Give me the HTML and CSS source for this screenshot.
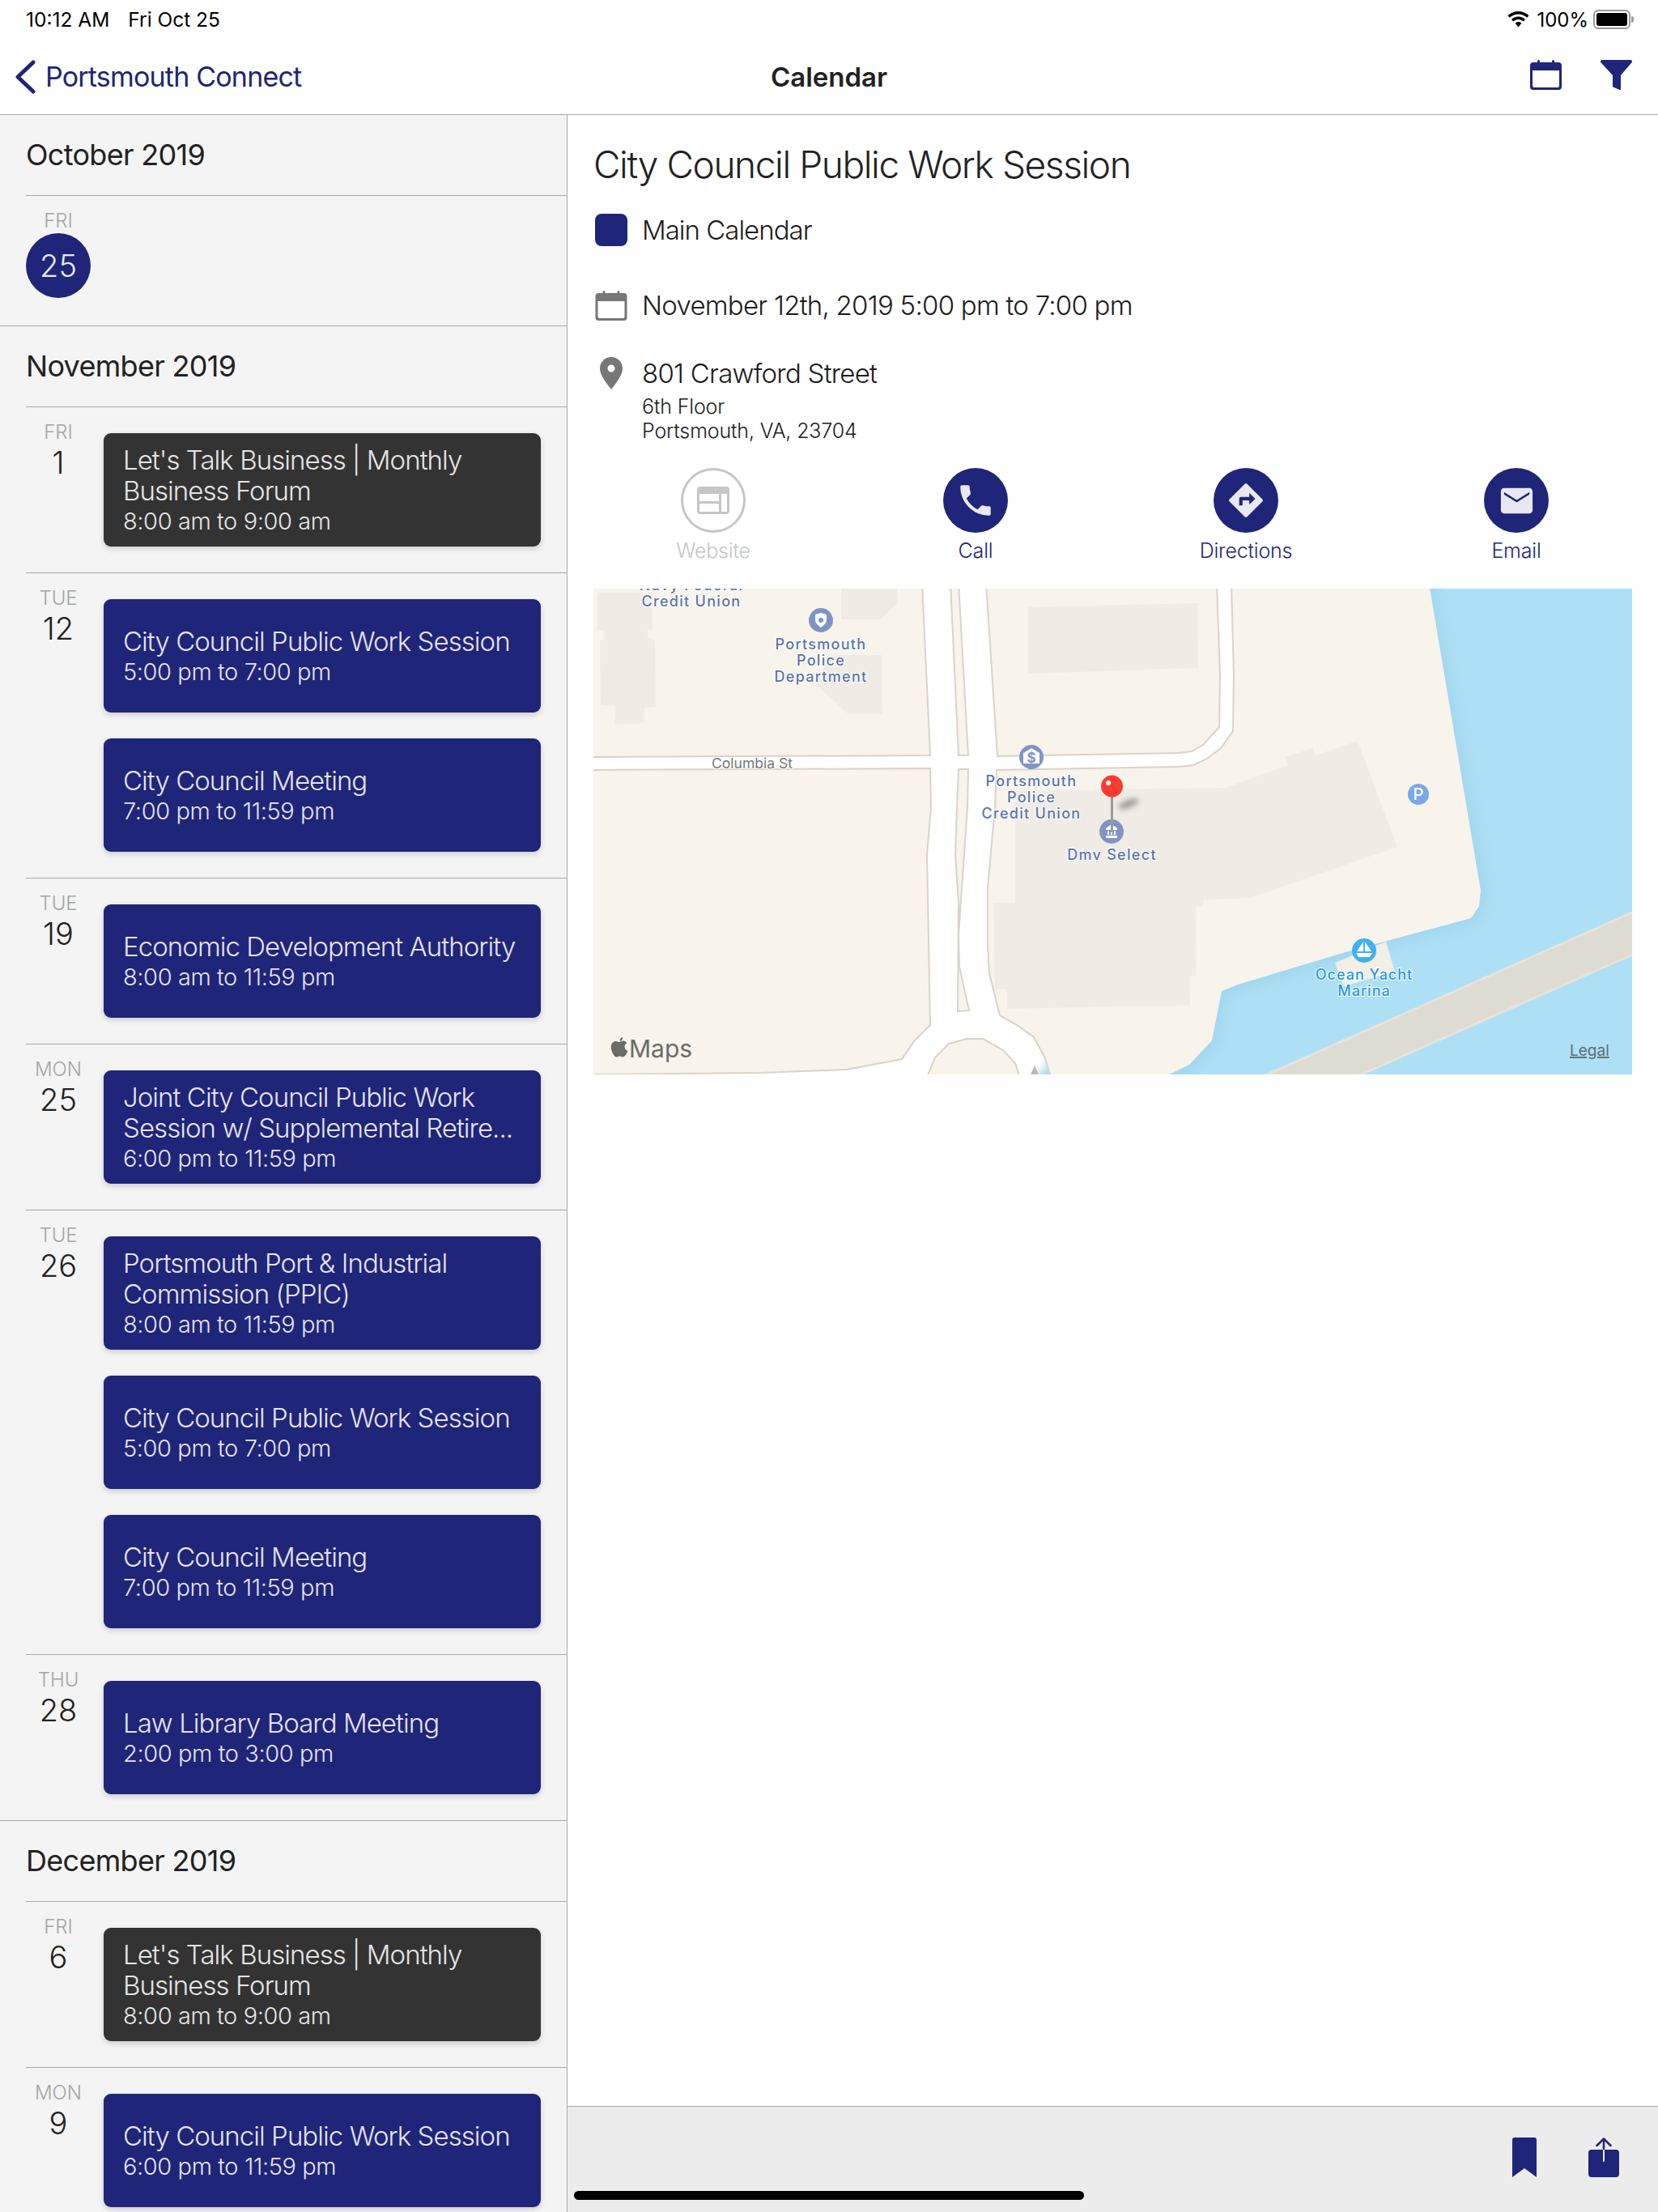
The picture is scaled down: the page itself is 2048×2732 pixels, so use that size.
FILE: index.html
```html
<!DOCTYPE html>
<html lang="en">
<head>
<meta charset="utf-8">
<title>Calendar</title>
<link rel="stylesheet" href="styles.css">
</head>
<body>
<div class="app">
  <header class="top">
    <div class="status">
      <div class="status-left"><span>10:12 AM</span><span>Fri Oct 25</span></div>
      <div class="status-right">
        <svg class="wifi" viewBox="0 0 27 20"><path d="M13.5 0C8.4 0 3.9 2 .5 5.2l2.3 2.5C5.600 5 9.300 3.400 13.500 3.400s7.900 1.600 10.700 4.300l2.300-2.500C23.100 2 18.600 0 13.500 0zM13.500 6.500c-3.300 0-6.300 1.300-8.500 3.400l2.300 2.500c1.600-1.500 3.800-2.500 6.200-2.500s4.600 1 6.200 2.500l2.300-2.500c-2.200-2.100-5.200-3.400-8.500-3.400zM13.500 13c-1.500 0-2.900.6-3.900 1.600l3.900 4.900 3.900-4.900c-1-1-2.400-1.600-3.900-1.600z"/></svg>
        <span class="pct">100%</span>
        <span class="battery"><span class="battery-fill"></span></span>
        <span class="battery-nub"></span>
      </div>
    </div>
    <nav class="nav">
      <div class="nav-back">
        <svg class="chevron" viewBox="0 0 26 42"><path d="M23 3 4 21l19 18" fill="none" stroke="currentColor" stroke-width="5" stroke-linecap="round" stroke-linejoin="round"/></svg>
        <span>Portsmouth Connect</span>
      </div>
      <div class="nav-title">Calendar</div>
      <div class="nav-icons">
        <svg class="nav-cal" viewBox="0 0 39 37"><path d="M4 3h5V1.500a1.500 1.500 0 0 1 3 0V3h15V1.500a1.500 1.500 0 0 1 3 0V3h5a4 4 0 0 1 4 4v26a4 4 0 0 1-4 4H4a4 4 0 0 1-4-4V7a4 4 0 0 1 4-4zM3 13v19a2 2 0 0 0 2 2h29a2 2 0 0 0 2-2V13z" fill="currentColor" fill-rule="evenodd"/></svg>
        <svg class="nav-filter" viewBox="0 0 39 37"><path d="M2 0h35a2 2 0 0 1 1.500 3.300L25 19v17a1 1 0 0 1-1.400.9l-8-3.400a1 1 0 0 1-.6-.9V19L.5 3.300A2 2 0 0 1 2 0z" fill="currentColor"/></svg>
      </div>
    </nav>
  </header>

  <div class="body">
    <aside class="side">
      <section class="month">
        <h2 class="month-title">October 2019</h2>
        <div class="row row-today">
          <div class="day"><div class="dow">FRI</div><div class="today">25</div></div>
        </div>
      </section>

      <section class="month">
        <h2 class="month-title">November 2019</h2>
        <div class="row">
          <div class="day"><div class="dow">FRI</div><div class="num">1</div></div>
          <div class="cards">
            <div class="card card-dark"><div class="card-title">Let's Talk Business | Monthly Business Forum</div><div class="card-time">8:00 am to 9:00 am</div></div>
          </div>
        </div>
        <div class="row">
          <div class="day"><div class="dow">TUE</div><div class="num">12</div></div>
          <div class="cards">
            <div class="card"><div class="card-title">City Council Public Work Session</div><div class="card-time">5:00 pm to 7:00 pm</div></div>
            <div class="card"><div class="card-title">City Council Meeting</div><div class="card-time">7:00 pm to 11:59 pm</div></div>
          </div>
        </div>
        <div class="row">
          <div class="day"><div class="dow">TUE</div><div class="num">19</div></div>
          <div class="cards">
            <div class="card"><div class="card-title">Economic Development Authority</div><div class="card-time">8:00 am to 11:59 pm</div></div>
          </div>
        </div>
        <div class="row">
          <div class="day"><div class="dow">MON</div><div class="num">25</div></div>
          <div class="cards">
            <div class="card"><div class="card-title">Joint City Council Public Work Session w/ Supplemental Retire...</div><div class="card-time">6:00 pm to 11:59 pm</div></div>
          </div>
        </div>
        <div class="row">
          <div class="day"><div class="dow">TUE</div><div class="num">26</div></div>
          <div class="cards">
            <div class="card"><div class="card-title">Portsmouth Port &amp; Industrial Commission (PPIC)</div><div class="card-time">8:00 am to 11:59 pm</div></div>
            <div class="card"><div class="card-title">City Council Public Work Session</div><div class="card-time">5:00 pm to 7:00 pm</div></div>
            <div class="card"><div class="card-title">City Council Meeting</div><div class="card-time">7:00 pm to 11:59 pm</div></div>
          </div>
        </div>
        <div class="row">
          <div class="day"><div class="dow">THU</div><div class="num">28</div></div>
          <div class="cards">
            <div class="card"><div class="card-title">Law Library Board Meeting</div><div class="card-time">2:00 pm to 3:00 pm</div></div>
          </div>
        </div>
      </section>

      <section class="month">
        <h2 class="month-title">December 2019</h2>
        <div class="row">
          <div class="day"><div class="dow">FRI</div><div class="num">6</div></div>
          <div class="cards">
            <div class="card card-dark"><div class="card-title">Let's Talk Business | Monthly Business Forum</div><div class="card-time">8:00 am to 9:00 am</div></div>
          </div>
        </div>
        <div class="row">
          <div class="day"><div class="dow">MON</div><div class="num">9</div></div>
          <div class="cards">
            <div class="card"><div class="card-title">City Council Public Work Session</div><div class="card-time">6:00 pm to 11:59 pm</div></div>
          </div>
        </div>
      </section>
    </aside>

    <main class="detail">
      <div class="detail-scroll">
        <h1 class="detail-title">City Council Public Work Session</h1>
        <div class="info info-cal"><span class="swatch"></span><span>Main Calendar</span></div>
        <div class="info info-date">
          <svg class="info-icon" viewBox="0 0 39 37"><path d="M4 3h5V1.500a1.500 1.500 0 0 1 3 0V3h15V1.500a1.500 1.500 0 0 1 3 0V3h5a4 4 0 0 1 4 4v26a4 4 0 0 1-4 4H4a4 4 0 0 1-4-4V7a4 4 0 0 1 4-4zM3 13v19a2 2 0 0 0 2 2h29a2 2 0 0 0 2-2V13z" fill="currentColor" fill-rule="evenodd"/></svg>
          <span>November 12th, 2019 5:00 pm to 7:00 pm</span>
        </div>
        <div class="info info-addr">
          <svg class="pin" viewBox="0 0 28 40"><path d="M14 0C6.300 0 0 6.200 0 14c0 9 9.500 20 14 26 4.500-6 14-17 14-26C28 6.200 21.700 0 14 0zm0 18.500a4.500 4.500 0 1 1 0-9 4.500 4.500 0 0 1 0 9z" fill="currentColor" fill-rule="evenodd"/></svg>
          <span>801 Crawford Street</span>
        </div>
        <div class="addr-lines"><div>6th Floor</div><div>Portsmouth, VA, 23704</div></div>

        <div class="actions">
          <div class="action action-off">
            <span class="circle circle-off"><svg viewBox="0 0 40 34"><path d="M4 0h32a4 4 0 0 1 4 4v26a4 4 0 0 1-4 4H4a4 4 0 0 1-4-4V4a4 4 0 0 1 4-4zM3 9v9h24V9zm0 12v10h24V21zM30 9v22h7V9z" fill="currentColor" fill-rule="evenodd"/></svg></span>
            <span class="action-label">Website</span>
          </div>
          <div class="action action-call">
            <span class="circle"><svg viewBox="0 0 24 24"><path d="M6.620 10.790c1.440 2.830 3.760 5.140 6.590 6.590l2.200-2.200c.270-.270.670-.360 1.020-.240 1.120.370 2.330.570 3.570.570.550 0 1 .450 1 1V20c0 .550-.450 1-1 1-9.390 0-17-7.610-17-17 0-.550.450-1 1-1h3.500c.550 0 1 .450 1 1 0 1.250.200 2.450.570 3.570.110.350.030.740-.250 1.020l-2.200 2.200z" fill="currentColor"/></svg></span>
            <span class="action-label">Call</span>
          </div>
          <div class="action">
            <span class="circle"><svg viewBox="0 0 24 24"><path d="M21.710 11.290l-9-9a.996.996 0 0 0-1.410 0l-9 9a.996.996 0 0 0 0 1.410l9 9c.390.390 1.020.390 1.410 0l9-9a.996.996 0 0 0 0-1.410zM14 14.500V12h-4v3H8v-4c0-.550.450-1 1-1h5V7.500l3.500 3.500-3.500 3.500z" fill="currentColor" fill-rule="evenodd"/></svg></span>
            <span class="action-label">Directions</span>
          </div>
          <div class="action">
            <span class="circle"><svg class="mail" viewBox="0 0 24 24"><path d="M20 4H4c-1.100 0-1.990.9-1.990 2L2 18c0 1.100.9 2 2 2h16c1.100 0 2-.9 2-2V6c0-1.100-.9-2-2-2zm0 4l-8 5-8-5V6.500l8 5 8-5V8z" fill="currentColor" fill-rule="evenodd"/></svg></span>
            <span class="action-label">Email</span>
          </div>
        </div>

        <svg class="map" viewBox="733 727 1283 600" preserveAspectRatio="none">
          <rect class="m-road" x="733" y="727" width="1283" height="600"/>
          <polygon class="m-water" points="1430,1327 1430,1180 1760,727 2016,727 2016,1327"/>
          <polygon class="m-bridge" points="2030,1121 2030,1173 1652,1340 1536,1340"/>
          <polygon class="m-halo" points="1298,1327 1444,1327 1469,1315 1497,1285 1509,1224 1529,1216 1665,1175 1817,1134 1827,1119 1829,1100 1765,727"/>
          <polygon class="m-land" points="725,720 1139,720 1149,933 725,935"/>
          <polygon class="m-land" points="725,951 1149,949 1150,997 1145,1056 1149,1266 1130,1285 1114,1308 1046,1321 940,1325 725,1327 725,1340"/>
          <polygon class="m-land" points="1174,720 1184,720 1196,933 1184,933"/>
          <polygon class="m-land" points="1184,950 1196,950 1195,997 1184,1155 1185,1194 1197,1248 1183,1249 1184,1115 1180,1056 1182,997"/>
          <polygon class="m-land" points="1218,720 1232,934 1457,930 1472,928 1486,920 1495,910 1506,898 1507,835 1503,720"/>
          <polygon class="m-land m-shore" points="1521,720 1524,835 1523,903 1508,924 1491,937 1474,945 1457,947 1231,951 1229,997 1220,1096 1220,1167 1222,1202 1235,1254 1256,1266 1277,1281 1290,1305 1298,1327 1444,1327 1469,1315 1497,1285 1509,1224 1529,1216 1665,1175 1817,1134 1827,1119 1829,1100 1765,720"/>
          <polyline class="m-edge" points="1521,720 1524,835 1523,903 1508,924 1491,937 1474,945 1457,947 1231,951 1229,997 1220,1096 1220,1167 1222,1202 1235,1254 1256,1266 1277,1281 1290,1305 1298,1330"/>
          <polygon class="m-land m-plain" points="1649,1189 1712,1163 1723,1200 1660,1218"/>
          <polygon class="m-land" points="1143,1335 1155,1306 1172,1289 1195,1283 1214,1283 1239,1297 1254,1313 1261,1335"/>
          <polygon class="m-bldg" points="738,732 793,732 806,752 806,777 800,777 800,789 809,791 810,873 796,874 796,893 760,895 760,872 742,871 741,791 747,790 746,779 738,778"/>
          <polygon class="m-bldg" points="1039,727 1108,727 1109,744 1088,765 1039,765"/>
          <polygon class="m-bldg" points="1025,809 1089,809 1090,882 1048,882 1008,846"/>
          <polygon class="m-bldg" points="1270,750 1479,745 1480,825 1270,832"/>
          <polygon class="m-bldg" points="1254,977 1380,975 1514,973 1591,945 1587,935 1621,924 1624,933 1677,915 1726,1046 1544,1109 1487,1111 1486,1119 1477,1120 1478,1205 1469,1206 1470,1242 1380,1243 1244,1246 1244,1222 1229,1222 1227,1115 1254,1115"/>

          <text class="m-label" x="854" y="729" text-anchor="middle">Navy Federal</text>
          <text class="m-label" x="854" y="749" text-anchor="middle">Credit Union</text>

          <circle class="m-poi" cx="1014" cy="766" r="15"/>
          <path d="M1014 757l7 2v6c0 5-4 8-7 10-3-2-7-5-7-10v-6z" fill="#fff"/>
          <circle cx="1014" cy="766" r="3" fill="#7f94c4"/>
          <text class="m-label" x="1014" y="802" text-anchor="middle">Portsmouth</text>
          <text class="m-label" x="1014" y="822" text-anchor="middle">Police</text>
          <text class="m-label" x="1014" y="842" text-anchor="middle">Department</text>

          <text class="m-street" x="929" y="949" text-anchor="middle">Columbia St</text>

          <circle class="m-poi" cx="1274" cy="935" r="15"/>
          <path d="M1264 930l10-6 10 6v13h-20z" fill="#fff"/>
          <text class="m-poi-glyph" x="1274" y="942" text-anchor="middle">$</text>
          <text class="m-label" x="1274" y="971" text-anchor="middle">Portsmouth</text>
          <text class="m-label" x="1274" y="991" text-anchor="middle">Police</text>
          <text class="m-label" x="1274" y="1011" text-anchor="middle">Credit Union</text>

          <circle class="m-poi" cx="1373" cy="1027" r="15"/>
          <path d="M1373 1018l7 5v2h-14v-2zM1366 1032h14v3h-14zM1368 1026h2v5h-2zM1372 1026h2v5h-2zM1376 1026h2v5h-2z" fill="#fff"/>
          <text class="m-label" x="1373.500" y="1062" text-anchor="middle">Dmv Select</text>

          <ellipse class="m-shadow" cx="1394" cy="993" rx="13" ry="5" transform="rotate(-22 1394 993)"/>
          <rect x="1372" y="981" width="3" height="47" fill="#9a9a9a"/>
          <circle cx="1373.500" cy="971" r="13.500" fill="#fd3b30"/>
          <circle cx="1369" cy="967" r="3" fill="#fff"/>

          <circle cx="1752" cy="981" r="13" fill="#78a8ea"/>
          <text class="m-poi-letter" x="1752" y="988" text-anchor="middle">P</text>

          <circle cx="1685" cy="1174" r="15" fill="#42b0f0"/>
          <path d="M1684 1163v12h-8zM1686 1163l8 12h-8zM1675 1177h20l-3 5h-14z" fill="#fff"/>
          <text class="m-label m-label-water" x="1685" y="1210" text-anchor="middle">Ocean Yacht</text>
          <text class="m-label m-label-water" x="1685" y="1230" text-anchor="middle">Marina</text>

          <path d="M1278 1316l-5 11h10z" fill="#bcb9b2"/>

          <path d="M769 1281c-2 .5-3.500 2.500-3.300 4.700 2.300.1 3.900-2.500 3.300-4.700zM765 1287c-1.600 0-2.600-1-4.200-1-3 0-6 2.500-6 7 0 5 3.500 12.500 6.500 12.500 1.600 0 2.200-1 4-1s2.300 1 4 1c2.600 0 5-4.500 6-7.500-2.400-1-3.700-3-3.700-5.200 0-2 1-3.700 2.800-4.800-1.200-1.700-3-2.500-5-2.500-1.800 0-3 1.500-4.400 1.500z" fill="#6b6b67"/>
          <text class="m-maps" x="777" y="1306">Maps</text>
          <text class="m-legal" x="1939" y="1304">Legal</text>
        </svg>
      </div>
      <footer class="foot">
        <svg class="foot-book" viewBox="0 0 30 49"><path d="M3 0h24a3 3 0 0 1 3 3v46L15 38 0 49V3a3 3 0 0 1 3-3z" fill="currentColor"/></svg>
        <svg class="foot-share" viewBox="0 0 38 49"><path d="M4 15h14v14a1 1 0 0 0 2 0V15h14a4 4 0 0 1 4 4v26a4 4 0 0 1-4 4H4a4 4 0 0 1-4-4V19a4 4 0 0 1 4-4z" fill="currentColor"/><path d="M19 14V2M10.500 10 19 1.500 27.500 10" fill="none" stroke="currentColor" stroke-width="2.500" stroke-linecap="round"/></svg>
      </footer>
    </main>
  </div>
  <div class="home-bar"></div>
</div>
</body>
</html>
```
FILE: styles.css
```css
* { box-sizing: border-box; }
html, body { margin: 0; padding: 0; }
body { background: #fff; font-family: Inter, "Liberation Sans", sans-serif; color: #1c1c1c; }
h1, h2 { margin: 0; font-weight: 400; }

.app { position: relative; width: 2048px; height: 2732px; overflow: hidden; display: flex; flex-direction: column; }

.top { height: 142px; border-bottom: 1px solid #a9a9a9; display: flex; flex-direction: column; flex: none; }
.status { height: 48px; display: flex; justify-content: space-between; align-items: center; padding: 0 30px 0 32px; font-size: 24.500px; color: #000; }
.status-left { display: flex; gap: 23px; }
.status-right { display: flex; align-items: center; }
.wifi { width: 27px; height: 20px; margin-right: 9px; }
.pct { margin-right: 6px; font-size: 24px; }
.battery { width: 46px; height: 24px; border: 2px solid #9b9b9b; border-radius: 6px; padding: 2px; display: block; }
.battery-fill { display: block; width: 100%; height: 100%; background: #000; border-radius: 3px; }
.battery-nub { width: 3px; height: 8px; background: #9b9b9b; border-radius: 0 3px 3px 0; margin-left: 1px; }

.nav { flex: 1; position: relative; display: flex; align-items: center; justify-content: space-between; padding: 0 32px 0 18px; color: #1f2578; }
.nav-back { display: flex; align-items: center; gap: 12px; font-size: 34px; letter-spacing: -0.8px; }
.chevron { width: 26px; height: 42px; }
.nav-title { position: absolute; left: 0; right: 0; top: 0; bottom: 0; display: flex; align-items: center; justify-content: center; font-size: 33px; font-weight: 600; color: #222; pointer-events: none; }
.nav-icons { display: flex; align-items: center; gap: 48px; margin-top: -4px; }
.nav-cal, .nav-filter { width: 39px; height: 37px; display: block; }

.body { flex: 1; min-height: 0; display: flex; }

.side { width: 701px; flex: none; background: #f4f4f4; border-right: 1px solid #a9a9a9; overflow: hidden; }
.month { border-bottom: 1px solid #a9a9a9; }
.month-title { height: 100px; margin-left: 32px; border-bottom: 1px solid #a9a9a9; display: flex; align-items: center; font-size: 36px; letter-spacing: -0.7px; color: #222; padding-bottom: 2px; }
.row { display: flex; gap: 16px; margin-left: 32px; padding: 16px 32px 32px 0; border-bottom: 1px solid #a9a9a9; }
.month .row:last-child { border-bottom: 0; }
.row-today { height: 160px; padding-bottom: 0; }
.day { width: 80px; flex: none; text-align: center; }
.dow { font-size: 24px; line-height: 30px; color: #a5a5a5; font-weight: 300; }
.num { font-size: 38px; line-height: 44px; color: #222; font-weight: 300; }
.today { width: 80px; height: 80px; border-radius: 50%; background: #1f2578; color: #e9e9f2; font-size: 38px; font-weight: 300; display: flex; align-items: center; justify-content: center; }
.cards { flex: 1; min-width: 0; margin-top: 16px; display: flex; flex-direction: column; gap: 32px; }
.card { height: 140px; border-radius: 9px; background: #1f2578; color: #e4e4f0; padding: 0 20px 0 24px; display: flex; flex-direction: column; justify-content: center; box-shadow: 0 3px 7px rgba(0,0,0,.16); }
.card-dark { background: #333; color: #e6e6e6; }
.card-title { font-size: 33px; line-height: 38px; font-weight: 300; letter-spacing: -0.95px; }
.card-time { font-size: 29px; line-height: 37px; font-weight: 300; letter-spacing: -0.4px; }

.detail { flex: 1; min-width: 0; display: flex; flex-direction: column; }
.detail-scroll { flex: 1; min-height: 0; padding: 33px 32px 0 32px; overflow: hidden; }
.detail-title { font-size: 46px; line-height: 56px; font-weight: 300; letter-spacing: -1.4px; color: #222; }
.info { display: flex; align-items: center; gap: 18px; padding-left: 2px; font-size: 33px; line-height: 40px; letter-spacing: -0.75px; color: #1c1c1c; font-weight: 300; }
.info-cal { margin-top: 33px; letter-spacing: -1px; }
.info-date { margin-top: 53px; }
.info-addr { margin-top: 44px; }
.swatch { width: 40px; height: 40px; border-radius: 8px; background: #1f2578; flex: none; }
.info-icon { width: 40px; height: 37px; color: #777; flex: none; }
.pin { width: 28px; height: 40px; margin: 0 6px; color: #777; flex: none; }
.addr-lines { margin: 7px 0 0 60px; font-size: 25px; line-height: 29.500px; font-weight: 300; letter-spacing: -0.15px; color: #1c1c1c; }
.actions { margin-top: 31px; display: flex; gap: 214px; padding-left: 88px; }
.action { width: 120px; display: flex; flex-direction: column; align-items: center; gap: 7px; color: #1f2578; }
.action-call { margin-left: -10px; }
.action-off { color: #c6c6c6; }
.circle { width: 80px; height: 80px; border-radius: 50%; background: #1f2578; color: #e8e8f2; display: flex; align-items: center; justify-content: center; }
.circle svg { width: 50px; height: 50px; }
.circle .mail { width: 47px; height: 47px; }
.circle-off { background: #fff; border: 3px solid #c6c6c6; color: #c6c6c6; }
.circle-off svg { width: 40px; height: 34px; }
.action-label { font-size: 25px; line-height: 30px; white-space: nowrap; font-weight: 300; letter-spacing: -0.2px; }

.map { display: block; width: 1283px; height: 600px; margin-top: 32px; }
.m-road { fill: #fff; }
.m-water { fill: #aee0f5; }
.m-bridge { fill: #dedbd3; stroke: #e6e3db; stroke-width: 3px; }
.m-halo { fill: none; stroke: #a3d8ee; stroke-width: 22px; filter: blur(6px); }
.m-land { fill: #f8f4ec; stroke: #d9d3c8; stroke-width: 2px; }
.m-shore { stroke: none; }
.m-edge { fill: none; stroke: #d9d3c8; stroke-width: 2px; }
.m-plain { fill: #f3eee6; stroke: none; }
.m-bldg { fill: #f0ece5; }
.m-poi { fill: #7f94c4; }
.m-shadow { fill: #8c8c86; opacity: .8; filter: blur(3px); }
.m-label { font-family: Inter, "Liberation Sans", sans-serif; font-size: 18px; letter-spacing: 1.300px; font-weight: 500; fill: #5b73ab; stroke: #fff; stroke-width: 2px; paint-order: stroke; }
.m-label-water { fill: #1e96ee; letter-spacing: 1px; }
.m-street { font-family: Inter, "Liberation Sans", sans-serif; font-size: 17.500px; fill: #777; stroke: #fff; stroke-width: 2px; paint-order: stroke; }
.m-poi-glyph { font-family: Inter, "Liberation Sans", sans-serif; font-size: 17px; font-weight: 700; fill: #7f94c4; }
.m-poi-letter { font-family: Inter, "Liberation Sans", sans-serif; font-size: 20px; font-weight: 500; fill: #fff; }
.m-maps { font-family: Inter, "Liberation Sans", sans-serif; font-size: 30px; fill: #6b6b67; }
.m-legal { font-family: Inter, "Liberation Sans", sans-serif; font-size: 19px; fill: #5a6f78; text-decoration: underline; }

.foot { height: 131px; flex: none; background: #ececec; border-top: 1px solid #a9a9a9; display: flex; align-items: flex-start; justify-content: flex-end; gap: 64px; padding: 38px 48px 0 0; color: #1f2578; }
.foot-book { width: 30px; height: 49px; }
.foot-share { width: 38px; height: 49px; }

.home-bar { position: absolute; left: 709px; top: 2706px; width: 630px; height: 11px; border-radius: 6px; background: #000; }
```
